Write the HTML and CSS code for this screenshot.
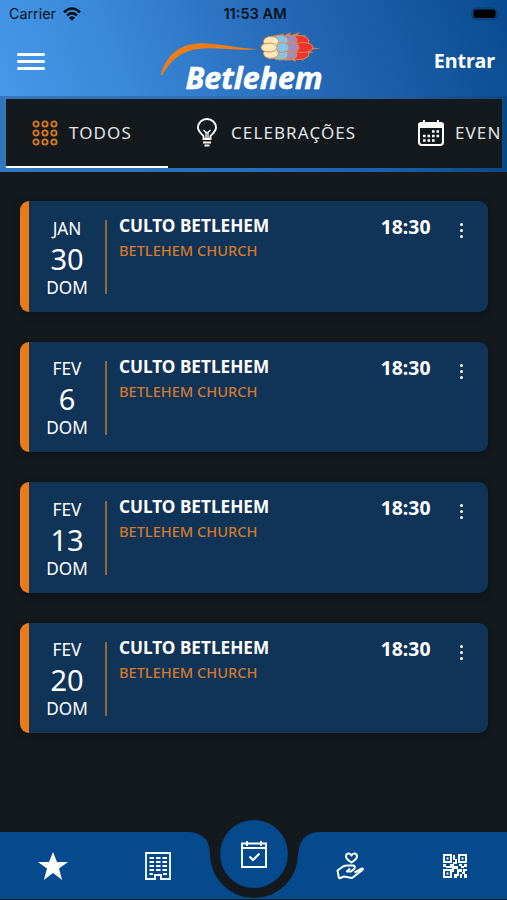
FILE: index.html
```html
<!DOCTYPE html>
<html lang="pt">
<head>
    <meta charset="UTF-8">
    <meta name="viewport" content="width=device-width, initial-scale=1.0">
    <title>Betlehem</title>
    <link rel="stylesheet" href="styles.css">
</head>
<body>
    <header class="header">
        <div class="status-bar">
            <div class="carrier">
                <span>Carrier</span>
                <svg class="wifi" viewBox="0 0 18 14" fill="none" stroke="#07111c" stroke-width="2.6">
                    <path d="M1 5.3Q9 -2.3 17 5.3M4 8.5Q9 3.8 14 8.5"/>
                    <path d="M6 10.7Q9 7.8 12 10.7L9 13.8Z" fill="#07111c" stroke="none"/>
                </svg>
            </div>
            <span class="clock">11:53 AM</span>
            <svg class="battery" viewBox="0 0 30 14">
                <rect x="1" y="1" width="25" height="11.5" rx="3.5" fill="none" stroke="#083a70"/>
                <rect x="2.5" y="2.5" width="22" height="8.5" rx="2" fill="#000"/>
                <path d="M27.5 5q1.5 1.8 0 3.6z" fill="#083a70"/>
            </svg>
        </div>

        <div class="title-bar">
            <button class="menu-button" aria-label="Menu">
                <span></span>
                <span></span>
                <span></span>
            </button>
            <svg class="logo" viewBox="0 0 180 70">
                <path d="M10.500 50.500C18 24 37 17 57 18.500C75 19.500 90 23.500 107 24C89 26.500 72 22.500 54 23.500C34 24 21 34 12.500 50Z" fill="#ee7d18"/>
                <path d="M118 14l6-4 4 1 6-3-1 3 8-4-2 4 11-4-4 5 10-2-5 5 9 0-5 4 8 1-6 2 14 1.500-14 1.500 7 3-9 0 5 4-9-1 3 5-9-4 1 5-8-4-2 3-6-3-4 2-4-4-5 0z" fill="#dd7f45"/>
                <g stroke="#e08a48" stroke-width="1">
                    <ellipse cx="149" cy="16" rx="10" ry="5.500" fill="#f2322f"/>
                    <ellipse cx="149" cy="29" rx="10" ry="5.500" fill="#f2322f"/>
                    <ellipse cx="153" cy="22.500" rx="10" ry="5" fill="#f2322f"/>
                    <ellipse cx="139" cy="15.500" rx="8" ry="5.500" fill="#a18cba"/>
                    <ellipse cx="139" cy="29.500" rx="8" ry="5.500" fill="#a18cba"/>
                    <ellipse cx="141" cy="22.500" rx="8" ry="5" fill="#a18cba"/>
                    <ellipse cx="130" cy="15.500" rx="8" ry="5.500" fill="#83c5e8"/>
                    <ellipse cx="130" cy="29.500" rx="8" ry="5.500" fill="#83c5e8"/>
                    <ellipse cx="131" cy="22.500" rx="8" ry="5" fill="#83c5e8"/>
                    <ellipse cx="121" cy="16.500" rx="7.500" ry="5" fill="#ffe9bd"/>
                    <ellipse cx="121" cy="28.500" rx="7.500" ry="5" fill="#ffe9bd"/>
                    <ellipse cx="119" cy="22.500" rx="8" ry="4.500" fill="#ffe9bd"/>
                </g>
                <text x="35.500" y="63.500" textLength="137" lengthAdjust="spacingAndGlyphs">Betlehem</text>
            </svg>
            <a href="#" class="login">Entrar</a>
        </div>

        <div class="tabs-frame">
            <nav class="tabs">
                <a href="#" class="tab tab-all active">
                    <svg class="tab-icon" viewBox="0 0 26 26" fill="none" stroke="#d9771e" stroke-width="1.900">
                        <circle cx="4" cy="4" r="2.600"/>
                        <circle cx="13" cy="4" r="2.600"/>
                        <circle cx="22" cy="4" r="2.600"/>
                        <circle cx="4" cy="13" r="2.600"/>
                        <circle cx="13" cy="13" r="2.600"/>
                        <circle cx="22" cy="13" r="2.600"/>
                        <circle cx="4" cy="22" r="2.600"/>
                        <circle cx="13" cy="22" r="2.600"/>
                        <circle cx="22" cy="22" r="2.600"/>
                    </svg>
                    <span>TODOS</span>
                </a>
                <a href="#" class="tab tab-celebrations">
                    <svg class="bulb-icon" viewBox="0 0 20 29" fill="none" stroke="#fff" stroke-width="1.900">
                        <path d="M6.500 21v-3C4.500 15.500 1 13.500 1 9.500a9 8.500 0 0 1 18 0c0 4-3.500 6-5.500 8.500v3z"/>
                        <path d="M6.500 12l2.500 2.500v6M13.500 12L11 14.500v6M9 14.500h2" stroke-width="1.300"/>
                        <path d="M6 24.500h8M7.500 27.500h5"/>
                    </svg>
                    <span>CELEBRAÇÕES</span>
                </a>
                <a href="#" class="tab tab-events">
                    <svg class="tab-icon" viewBox="0 0 26 26">
                        <rect x="1" y="3" width="24" height="22" rx="3" fill="none" stroke="#fff" stroke-width="2"/>
                        <path d="M0 8V5q0-3 4-3h18q4 0 4 3v3zM5 0h2v4H5zM19 0h2v4h-2z" fill="#fff"/>
                        <g stroke="#fff" stroke-width="2.600" stroke-dasharray="2.600 1.900">
                            <path d="M14 11.500h8M5 16h16.500M5 20.500h12"/>
                        </g>
                    </svg>
                    <span>EVEN</span>
                </a>
            </nav>
        </div>
    </header>

    <main class="event-list">
        <article class="event-card">
            <div class="event-date">
                <span>JAN</span>
                <span class="day">30</span>
                <span>DOM</span>
            </div>
            <div class="event-info">
                <h2>CULTO BETLEHEM</h2>
                <p>BETLEHEM CHURCH</p>
            </div>
            <time class="event-time">18:30</time>
            <button class="more" aria-label="Mais"><i></i><i></i><i></i></button>
        </article>

        <article class="event-card">
            <div class="event-date">
                <span>FEV</span>
                <span class="day">6</span>
                <span>DOM</span>
            </div>
            <div class="event-info">
                <h2>CULTO BETLEHEM</h2>
                <p>BETLEHEM CHURCH</p>
            </div>
            <time class="event-time">18:30</time>
            <button class="more" aria-label="Mais"><i></i><i></i><i></i></button>
        </article>

        <article class="event-card">
            <div class="event-date">
                <span>FEV</span>
                <span class="day">13</span>
                <span>DOM</span>
            </div>
            <div class="event-info">
                <h2>CULTO BETLEHEM</h2>
                <p>BETLEHEM CHURCH</p>
            </div>
            <time class="event-time">18:30</time>
            <button class="more" aria-label="Mais"><i></i><i></i><i></i></button>
        </article>

        <article class="event-card">
            <div class="event-date">
                <span>FEV</span>
                <span class="day">20</span>
                <span>DOM</span>
            </div>
            <div class="event-info">
                <h2>CULTO BETLEHEM</h2>
                <p>BETLEHEM CHURCH</p>
            </div>
            <time class="event-time">18:30</time>
            <button class="more" aria-label="Mais"><i></i><i></i><i></i></button>
        </article>
    </main>

    <nav class="bottom-nav">
        <svg class="nav-shape" viewBox="0 0 507 80" aria-hidden="true">
            <path d="M0 12H190Q210 14 210 34A44 44 0 0 0 298 34Q300 12 320 12H507V79H0Z" fill="#044a8d"/>
        </svg>
        <a href="#" aria-label="Favoritos">
            <svg width="30" height="28" viewBox="0 0 30 28" fill="#fff">
                <path d="M15 0l4 10h11l-9 6.500 3.200 11.500-9.200-7-9.200 7L9 16.500 0 10h11z"/>
            </svg>
        </a>
        <a href="#" aria-label="Igrejas">
            <svg width="26" height="28" viewBox="0 0 26 28" fill="none" stroke="#fff" stroke-width="1.800">
                <path d="M1 1h24v26h-9v-4h-6v4H1z"/>
                <path d="M4.500 6h4.500M11 6h4.500M17.500 6H22M4.500 10h4.500M11 10h4.500M17.500 10H22M4.500 14h4.500M11 14h4.500M17.500 14H22M4.500 18h4.500M11 18h4.500M17.500 18H22M4.500 22H8M18 22h4" stroke-width="2.200"/>
            </svg>
        </a>
        <a href="#" class="agenda" aria-label="Agenda">
            <svg width="26" height="27" viewBox="0 0 26 27" fill="none" stroke="#fff" stroke-width="1.900">
                <path d="M1 2.500h24v23.500H1zM1 7h24M6 0v5M20 0v5"/>
                <path d="M8.500 15.500l3.500 3.500 6.500-6.500" stroke-width="2.200"/>
            </svg>
        </a>
        <a href="#" aria-label="Doar">
            <svg width="28" height="28" viewBox="0 0 28 28" fill="none" stroke="#fff" stroke-width="2" stroke-linejoin="round">
                <path d="M15.500 10.500C12.500 8.500 10 6.500 10 4.500c0-3.500 4-4 5.500-1 1.500-3 5.500-2.500 5.500 1 0 2-2.500 4-5.500 6z"/>
                <path d="M3 26.500L1.500 18.500l5.500-4Q9 13.500 11 13.500h6.500q2.500 1 .5 3.500l-3 2.500h-4l3-3M18.500 20.500l7.500-4q1.500 0 .5 1.500L16 26l-8-1.500-5 2"/>
            </svg>
        </a>
        <a href="#" aria-label="QR Code">
            <svg width="24" height="24" viewBox="0 0 24 24" fill="#fff">
                <path fill-rule="evenodd" d="M0 0h9v9H0zM2 2v5h5V2zM15 0h9v9h-9zM17 2v5h5V2zM0 15h9v9H0zM2 17v5h5v-5z"/>
                <path d="M3.500 3.500h2v2h-2zM18.500 3.500h2v2h-2zM3.500 18.500h2v2h-2zM10 1h2v4h2v5h-4V8h2V6h-2zM0 10h3v2h4v2H3v-1H0zM7 10h4v2h4v3h-4v3h-2v-4H7zM16 10h3v2h-3zM21 10h3v3h-3zM18 12h3v2h-3zM14 15h5v3h-3v4h-2v2h-3v-4h3zM20 15h4v2h-2v3h-3v-2h1zM17 20h2v4h-2zM21 20h3v4h-3z"/>
            </svg>
        </a>
    </nav>
</body>
</html>
```
FILE: styles.css
```css
* {
    margin: 0;
    padding: 0;
    box-sizing: border-box;
}

body {
    width: 507px;
    height: 900px;
    display: flex;
    flex-direction: column;
    overflow: hidden;
    background: #13191d;
    color: white;
    font-family: 'Noto Sans', 'Open Sans', sans-serif;
}

a {
    color: inherit;
    text-decoration: none;
}

button {
    border: 0;
    background: transparent;
}

svg {
    display: block;
    flex-shrink: 0;
    overflow: visible;
}

.header {
    height: 172px;
    background: linear-gradient(69deg, #4a9cee, #3a88d8 28%, #2367b4 62%, #084b8f);
}

.status-bar {
    display: grid;
    grid-template-columns: 1fr auto 1fr;
    align-items: center;
    height: 27px;
    padding: 0 6px 0 9px;
    font-family: 'Inter', sans-serif;
    font-size: 14px;
    color: #07111c;
}

.carrier {
    display: flex;
    align-items: center;
    gap: 7px;
    font-size: 14.3px;
}

.wifi {
    width: 18px;
    height: 14px;
}

.clock {
    font-size: 14.6px;
    font-weight: 600;
}

.battery {
    width: 30px;
    height: 14px;
    justify-self: end;
}

.title-bar {
    display: flex;
    align-items: center;
    height: 69px;
    padding: 0 12px 0 17px;
}

.menu-button {
    display: flex;
    flex-direction: column;
    gap: 4px;
    width: 28px;
}

.menu-button span {
    height: 3px;
    border-radius: 2px;
    background: white;
}

.logo {
    width: 180px;
    height: 70px;
    margin: -3px 0 0 105px;
}

.logo text {
    font: italic 700 31px/1 'Open Sans', sans-serif;
    fill: white;
    stroke: white;
    stroke-width: 0.6px;
}

.login {
    margin-left: auto;
    font-size: 19.7px;
    font-weight: 700;
    margin-top: -2px;
}

.tabs-frame {
    height: 76px;
    padding: 3px 5px 4px 6px;
    background: linear-gradient(90deg, #3277bd, #2a6fb8 45%, #1f60a8 75%, #0b4883);
}

.tabs {
    display: flex;
    height: 69px;
    overflow: hidden;
    background: #13191d;
}

.tab {
    display: flex;
    flex-shrink: 0;
    align-items: center;
    height: 69px;
    border-bottom: 2px solid transparent;
    font-size: 17px;
    letter-spacing: 1.1px;
    color: #e1e4e6;
}

.tab.active {
    border-color: white;
}

.tab-all {
    width: 162px;
    padding-left: 26px;
    gap: 11px;
}

.tab-celebrations {
    width: 222px;
    padding-left: 29px;
    gap: 14px;
}

.tab-events {
    padding-left: 28px;
    gap: 11px;
}

.tab-icon {
    width: 26px;
    height: 26px;
}

.bulb-icon {
    width: 20px;
    height: 29px;
}

.event-list {
    flex: 1;
    display: flex;
    flex-direction: column;
    gap: 30px;
    padding: 29.3px 19px 0 20px;
}

.event-card {
    display: flex;
    align-items: flex-start;
    height: 110.5px;
    flex-shrink: 0;
    border-left: 9px solid #e97b1b;
    border-radius: 9px;
    background: #103358;
    box-shadow: 0 2px 9px rgba(0, 0, 0, 0.3);
}

.event-date {
    display: flex;
    flex-direction: column;
    align-items: center;
    justify-content: center;
    width: 78px;
    height: 74px;
    margin-top: 19px;
    padding-top: 2px;
    border-right: 2px solid #96683f;
    font-size: 17.2px;
    line-height: 26px;
}

.event-date .day {
    font-size: 29px;
    line-height: 33px;
}

.event-info {
    padding: 12px 0 0 12px;
}

.event-info h2 {
    font-size: 17.2px;
    line-height: 25px;
}

.event-info p {
    font-size: 14.6px;
    font-weight: 500;
    line-height: 25px;
    color: #d37a2c;
}

.event-time {
    margin-left: auto;
    padding-top: 12px;
    font-size: 19.4px;
    font-weight: 700;
    line-height: 28px;
}

.more {
    display: flex;
    flex-direction: column;
    gap: 3px;
    margin: 22px 25.5px 0 29px;
}

.more i {
    width: 3px;
    height: 3px;
    border-radius: 50%;
    background: white;
}

.bottom-nav {
    position: relative;
    display: flex;
    align-items: center;
    height: 80px;
    flex-shrink: 0;
    padding-top: 12px;
}

.bottom-nav a {
    position: relative;
    flex: 1;
    display: flex;
    justify-content: center;
}

/* the bar dips under the round button */
.nav-shape {
    position: absolute;
    top: 0;
    left: 0;
    width: 507px;
    height: 80px;
}

.bottom-nav .agenda {
    flex: 0 0 68px;
    align-items: center;
    height: 68px;
    margin: -24px 9.5px 0;
    border-radius: 50%;
    background: #044a8d;
}
```
